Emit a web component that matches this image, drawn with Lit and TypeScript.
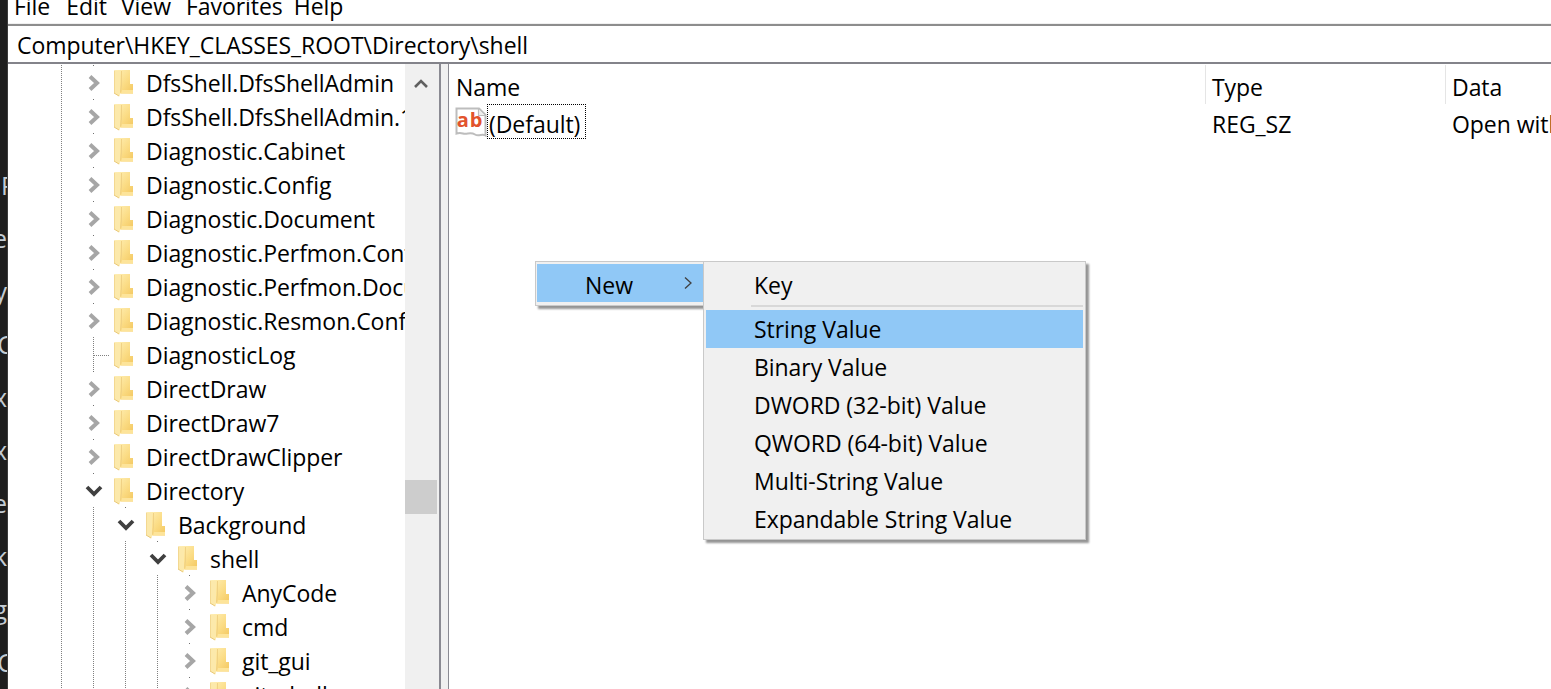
import { LitElement, html, css, svg } from "lit";
import { customElement } from "lit/decorators.js";

type Node = { t: string; lvl: number; kind: "c" | "e" | "l" };

const ROWS: Node[] = [
  { t: "DfsShell.DfsShellAdmin", lvl: 0, kind: "c" },
  { t: "DfsShell.DfsShellAdmin.1", lvl: 0, kind: "c" },
  { t: "Diagnostic.Cabinet", lvl: 0, kind: "c" },
  { t: "Diagnostic.Config", lvl: 0, kind: "c" },
  { t: "Diagnostic.Document", lvl: 0, kind: "c" },
  { t: "Diagnostic.Perfmon.Config", lvl: 0, kind: "c" },
  { t: "Diagnostic.Perfmon.Document", lvl: 0, kind: "c" },
  { t: "Diagnostic.Resmon.Config", lvl: 0, kind: "c" },
  { t: "DiagnosticLog", lvl: 0, kind: "l" },
  { t: "DirectDraw", lvl: 0, kind: "c" },
  { t: "DirectDraw7", lvl: 0, kind: "c" },
  { t: "DirectDrawClipper", lvl: 0, kind: "c" },
  { t: "Directory", lvl: 0, kind: "e" },
  { t: "Background", lvl: 1, kind: "e" },
  { t: "shell", lvl: 2, kind: "e" },
  { t: "AnyCode", lvl: 3, kind: "c" },
  { t: "cmd", lvl: 3, kind: "c" },
  { t: "git_gui", lvl: 3, kind: "c" },
  { t: "git_shell", lvl: 3, kind: "c" },
];

const STRIP = [
  { c: "P", off: -9 },
  { c: "e", off: 0 },
  { c: "y", off: 0 },
  { c: "C", off: -6 },
  { c: "x", off: 0 },
  { c: "x", off: 0 },
  { c: "e", off: 0 },
  { c: "k", off: 0 },
  { c: "g", off: 0 },
  { c: "C", off: -6 },
];

const MENU = [
  { t: "File", gap: 6 },
  { t: "Edit", gap: 16 },
  { t: "View", gap: 14 },
  { t: "Favorites", gap: 15 },
  { t: "Help", gap: 11 },
];

const SUB = ["String Value", "Binary Value", "DWORD (32-bit) Value", "QWORD (64-bit) Value", "Multi-String Value", "Expandable String Value"];

const folder = svg`<svg class="folder" width="20" height="27" viewBox="0 0 20 27">
  <defs><linearGradient id="fg" x1="0" y1="0" x2="1" y2="1">
    <stop offset="0" stop-color="#fff0b8"/><stop offset="0.55" stop-color="#fbdc85"/><stop offset="1" stop-color="#f3c75f"/>
  </linearGradient></defs>
  <path d="M1 0H16V14H19V23.5H6V20H1Z" fill="url(#fg)"/>
  <path d="M0 0.5L6 1V23.5L5.5 26.5L0 23Z" fill="#fce9ab"/>
  <path d="M0 0.5V23L5 26" fill="none" stroke="#e9c878" stroke-width="1"/>
  <path d="M6.5 22L7.5 15V1" fill="none" stroke="#f0d184" stroke-width="1"/>
  <path d="M7 23.5H19V20H8Z" fill="#fde49a"/>
</svg>`;

const chevR = svg`<svg width="14" height="18" viewBox="0 0 14 18"><path d="M3 2.500L10 9L3 15.500" fill="none" stroke="#a6a6a6" stroke-width="4"/></svg>`;
const chevD = svg`<svg width="18" height="14" viewBox="0 0 18 14"><path d="M2 3L9 10L16 3" fill="none" stroke="#404040" stroke-width="3.8"/></svg>`;

@customElement("app-root")
export class AppRoot extends LitElement {
  static styles = css`
    :host {
      display: block;
      width: 1551px;
      height: 689px;
      overflow: hidden;
      background: #fff;
      font-family: "Open Sans", "Noto Sans", sans-serif;
      font-size: 23px;
      letter-spacing: -0.05px;
      color: #000;
      position: relative;
    }
    .shell { display: flex; height: 689px; }
    .strip {
      width: 8px;
      flex: none;
      background: #1e1e1e;
      border-right: 1px solid #3c3c3c;
      overflow: hidden;
      padding-top: 159px;
      box-sizing: border-box;
      color: #c4ccd4;
    }
    .strip div {
      height: 53px;
      line-height: 53px;
      display: flex;
      justify-content: flex-end;
      font-size: 25px;
    }
    .main { flex: 1; min-width: 0; display: flex; flex-direction: column; }
    .menubar {
      height: 24px;
      flex: none;
      display: flex;
      overflow: hidden;
      align-items: flex-end;
      border-bottom: 2px solid #8d8d8d;
      box-shadow: inset 0 -1px 0 #f0f0f0;
    }
    .menubar span { line-height: 36px; height: 36px; }
    .addr {
      height: 36px;
      flex: none;
      line-height: 38px;
      padding-left: 9px;
      border-bottom: 2px solid #83838a;
    }
    .body { flex: 1; min-height: 0; display: flex; }
    .treewrap { width: 431px; flex: none; display: flex; }
    .tree { width: 397px; flex: none; overflow: hidden; padding-top: 1px; }
    .row { display: flex; height: 34px; white-space: nowrap; margin-left: 37px; }
    .guide, .exp { width: 32px; flex: none; position: relative; }
    .guide::before {
      content: "";
      position: absolute;
      left: 16px;
      top: 0;
      bottom: 0;
      width: 1px;
      background: repeating-linear-gradient(#808080 0 1px, transparent 1px 2px);
    }
    .exp { display: flex; align-items: center; justify-content: center; }
    .exp::before {
      content: "";
      position: absolute;
      left: 16px;
      top: 0;
      width: 1px;
      height: 1px;
      background: #707070;
    }
    .exp.leaf::before {
      height: 35px;
      background: repeating-linear-gradient(#808080 0 1px, transparent 1px 2px);
    }
    .exp.leaf::after {
      content: "";
      position: absolute;
      left: 17px;
      top: 18px;
      width: 15px;
      height: 1px;
      background: repeating-linear-gradient(90deg, #808080 0 1px, transparent 1px 2px);
    }
    .exp svg { position: relative; margin-left: 2px; margin-top: 2px; }
    .exp.open svg { margin-left: 1px; }
    .icon { width: 37px; flex: none; display: flex; align-items: center; padding-left: 5px; box-sizing: border-box; }
    .folder { display: block; margin-top: 2px; }
    .label { line-height: 36px; }
    .scroll { width: 34px; flex: none; background: #f0f0f0; display: flex; flex-direction: column; align-items: flex-start; }
    .scroll .up { height: 40px; width: 32px; display: flex; align-items: center; justify-content: center; flex: none; }
    .thumb { width: 32px; height: 34px; background: #cdcdcd; margin-top: 376px; }
    .split {
      width: 10px;
      flex: none;
      box-sizing: border-box;
      background: #f0f0f0;
      border-left: 2px solid #8a8a92;
      border-right: 1px solid #8a8a92;
    }
    .list { flex: 1; min-width: 0; overflow: hidden; }
    .head, .item { display: grid; grid-template-columns: 756px 240px 1fr; white-space: nowrap; }
    .head { height: 40px; line-height: 44px; padding-top: 1px; box-sizing: border-box; }
    .head div { padding-left: 6px; border-left: 1px solid #e5e5e5; height: 39px; }
    .head div:first-child { border-left: 0; padding-left: 7px; }
    .item { height: 36px; line-height: 40px; }
    .item > div { padding-left: 7px; overflow: hidden; }
    .item > .namecell { padding-left: 6px; display: flex; align-items: flex-start; overflow: visible; }
    .ab { flex: none; margin-top: 2px; display: block; }
    .focus {
      border: 1px dotted #000;
      height: 35px;
      box-sizing: border-box;
      line-height: 38px;
      padding: 0 5px 0 1px;
    }
    .ctx {
      position: absolute;
      left: 535px;
      top: 261px;
      display: flex;
      align-items: flex-start;
    }
    .m1, .m2 {
      background: #f0f0f0;
      border: 1px solid #c9c9c9;
      box-shadow: 3px 3px 2px rgba(0, 0, 0, 0.42);
      box-sizing: border-box;
    }
    .m1 { width: 169px; height: 45px; padding: 2px 0 2px 1px; }
    .m1 .hi {
      height: 38px;
      width: 166px;
      background: #90c8f6;
      display: flex;
      align-items: center;
      justify-content: space-between;
      padding: 4px 10px 0 48px;
      box-sizing: border-box;
    }
    .m1 .hi svg { margin-top: -4px; }
    .m2 { width: 383px; height: 279px; margin-left: -1px; padding: 4px 2px 2px 2px; }
    .mi { height: 38px; line-height: 38px; padding-left: 48px; white-space: nowrap; }
    .mi.sel { background: #90c8f6; }
    .sep { height: 2px; background: #d8d8d8; margin: 1px 0 3px 45px; }
  `;

  render() {
    return html`
      <div class="shell">
        <div class="strip">
          ${STRIP.map((s) => html`<div><span style="margin-right:${s.off}px">${s.c}</span></div>`)}
        </div>
        <div class="main">
          <div class="menubar">
            ${MENU.map((m) => html`<span style="margin-left:${m.gap}px">${m.t}</span>`)}
          </div>
          <div class="addr">Computer\\HKEY_CLASSES_ROOT\\Directory\\shell</div>
          <div class="body">
            <div class="treewrap">
              <div class="tree">
                ${ROWS.map(
                  (r) => html`<div class="row">
                    ${Array.from({ length: r.lvl + 1 }).map(() => html`<div class="guide"></div>`)}
                    <div class="exp ${r.kind === "l" ? "leaf" : r.kind === "e" ? "open" : ""}">
                      ${r.kind === "c" ? chevR : r.kind === "e" ? chevD : ""}
                    </div>
                    <div class="icon">${folder}</div>
                    <div class="label">${r.t}</div>
                  </div>`
                )}
              </div>
              <div class="scroll">
                <div class="up">
                  <svg width="16" height="12" viewBox="0 0 16 12"><path d="M2 9L8 3L14 9" fill="none" stroke="#606060" stroke-width="2.6"/></svg>
                </div>
                <div class="thumb"></div>
              </div>
            </div>
            <div class="split"></div>
            <div class="list">
              <div class="head"><div>Name</div><div>Type</div><div>Data</div></div>
              <div class="item">
                <div class="namecell">
                  <svg class="ab" width="32" height="32" viewBox="0 0 32 32">
                    <path d="M1.500 2.500H24L30.500 9V29.500C27 27 24 31 20 28.500C15 25.500 12 29 8 27.500C5 26.500 3 27 1.500 27.500Z" fill="#fff" stroke="#bdbdbd" stroke-width="2"/>
                    <path d="M23.500 3V9.500H30" fill="#eee" stroke="#bdbdbd" stroke-width="1.200"/>
                    <text x="15" y="21" text-anchor="middle" font-family="Open Sans, sans-serif" font-weight="700" font-size="20" letter-spacing="0.800" fill="#e2532d">ab</text>
                  </svg>
                  <div class="focus">(Default)</div>
                </div>
                <div>REG_SZ</div>
                <div>Open with Code</div>
              </div>
            </div>
          </div>
        </div>
      </div>
      <div class="ctx">
        <div class="m1">
          <div class="hi">
            <span>New</span>
            <svg width="10" height="14" viewBox="0 0 10 14"><path d="M2 1.500L8 7L2 12.500" fill="none" stroke="#404040" stroke-width="1.300"/></svg>
          </div>
        </div>
        <div class="m2">
          <div class="mi">Key</div>
          <div class="sep"></div>
          ${SUB.map((s, i) => html`<div class="mi ${i === 0 ? "sel" : ""}">${s}</div>`)}
        </div>
      </div>
    `;
  }
}
